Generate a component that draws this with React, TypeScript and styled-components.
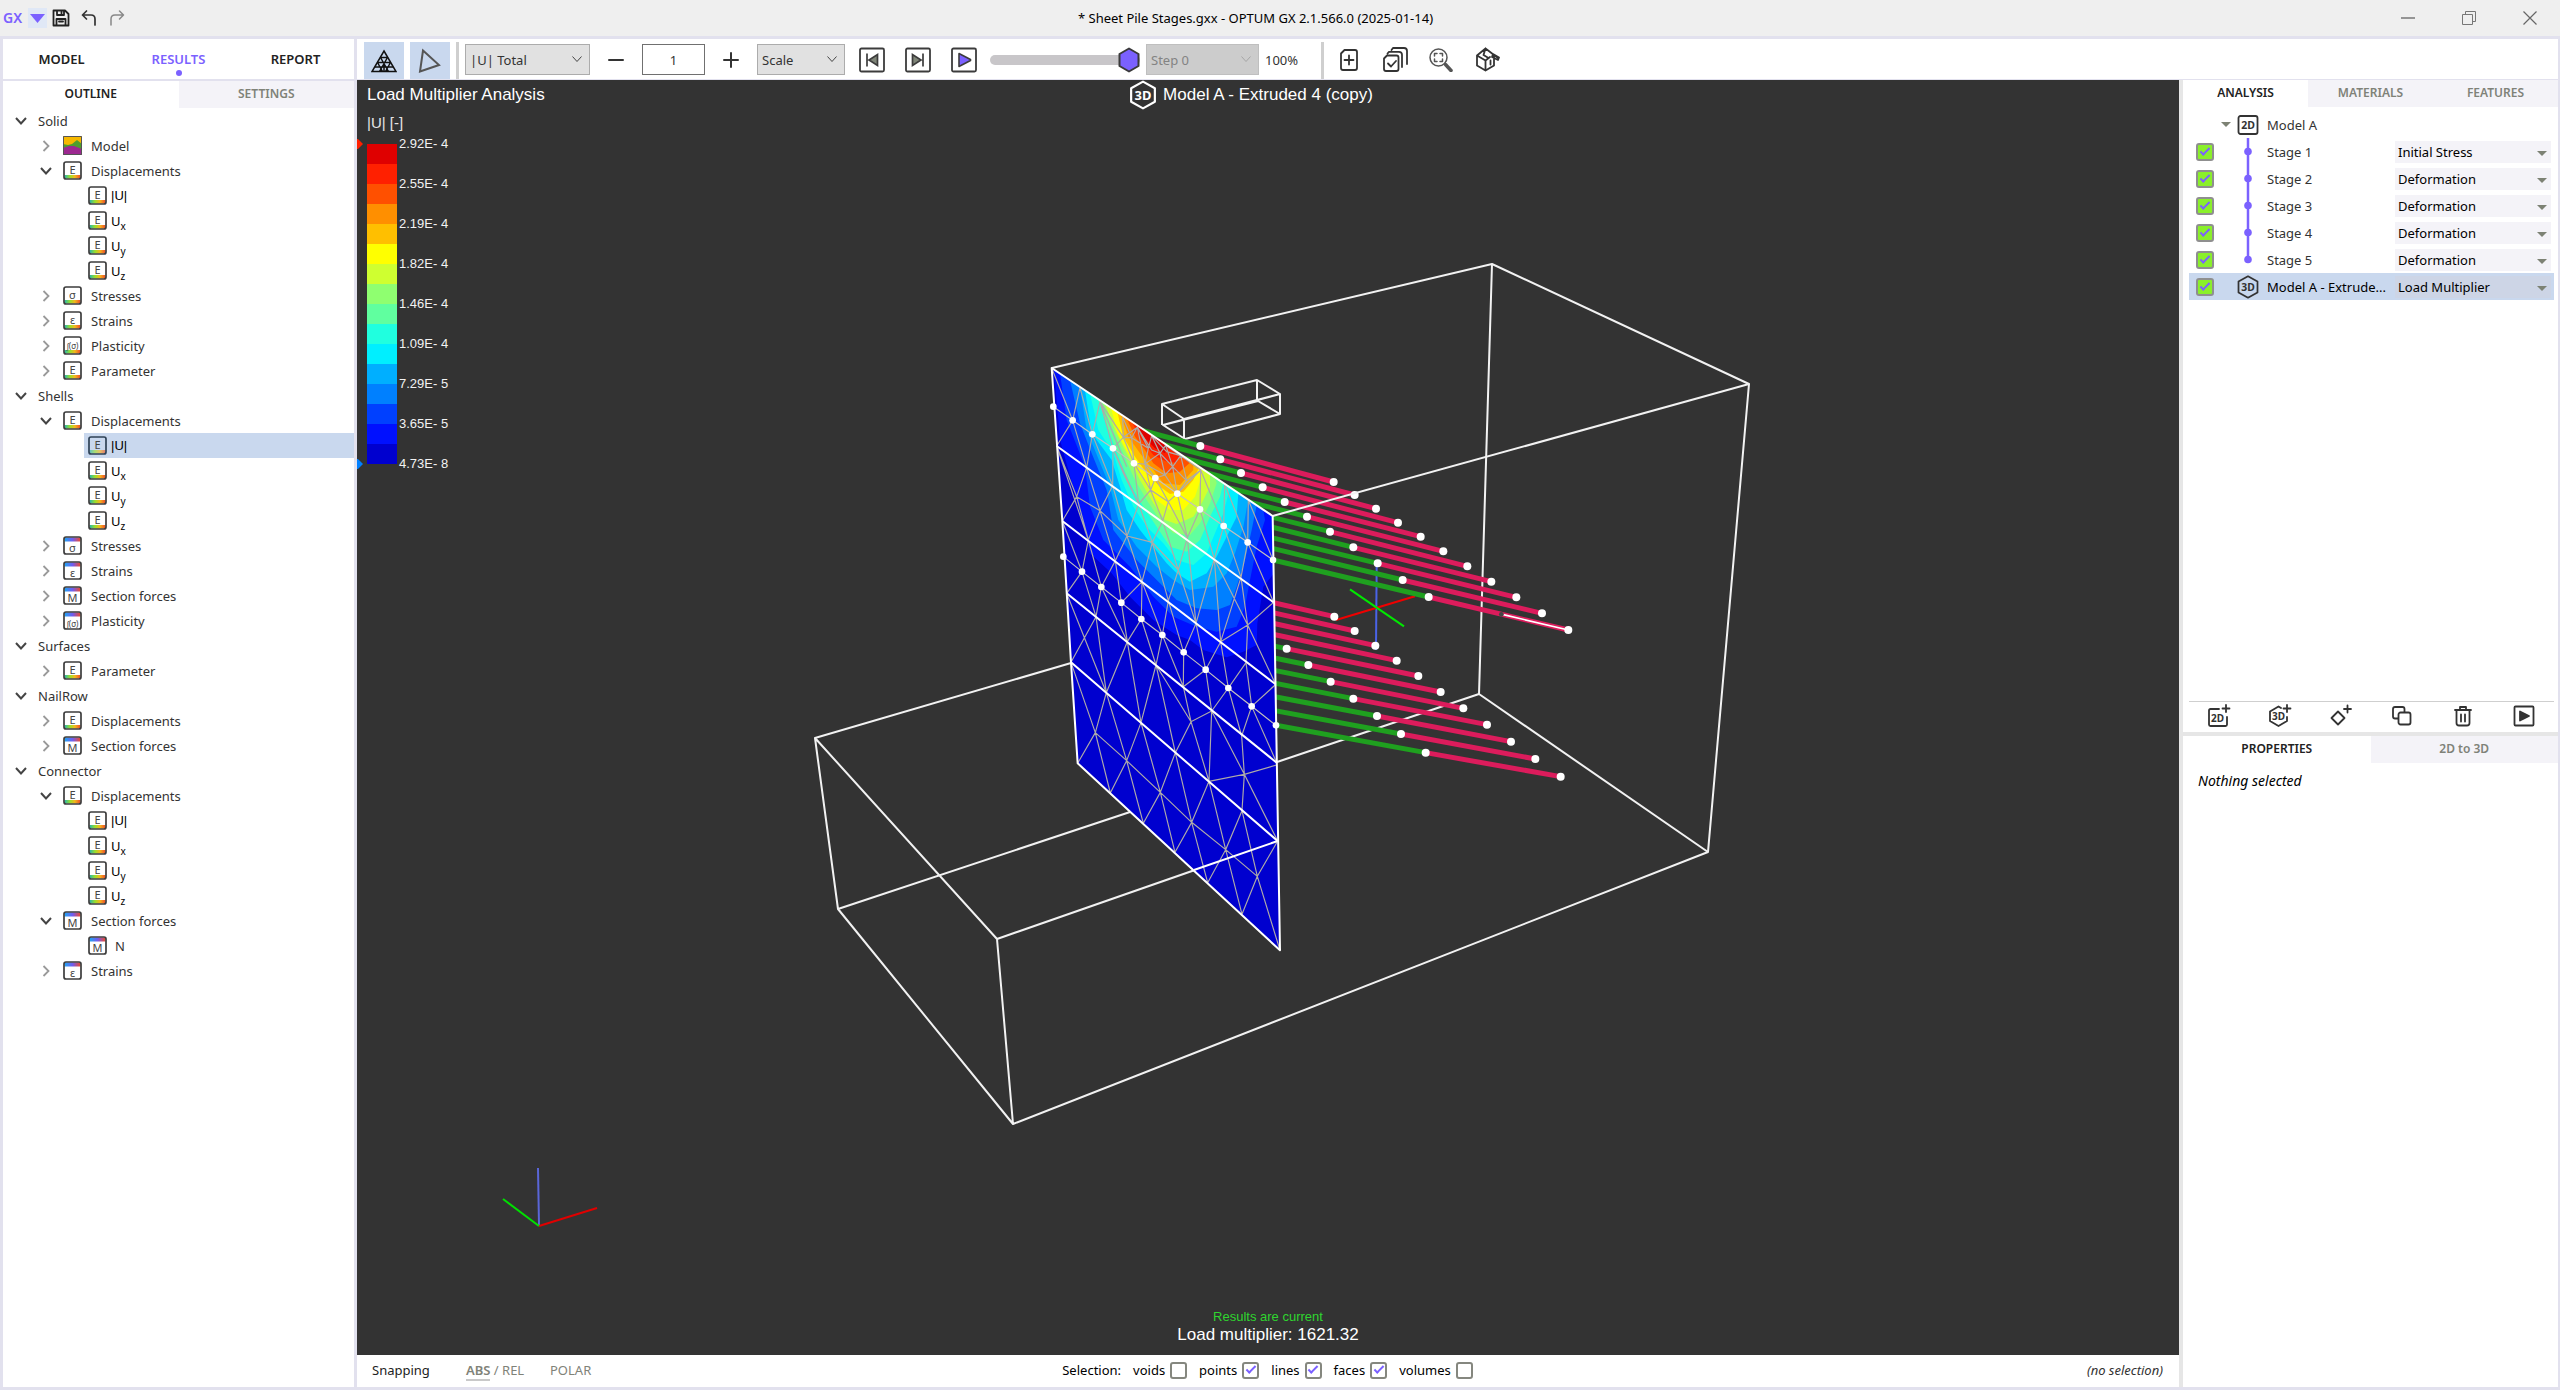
import React from "react";
import styled, { createGlobalStyle, css } from "styled-components";

const ink = "#333333";
const violet = "#7b61ff";
const lavender = "#e2e1ee";
const mutedTab = "#7f8278";
const pale = "#f4f3f8";
const picked = "#c9d8ee";
const ui = '"Noto Sans", "Open Sans", sans-serif';
const plain = '"Liberation Sans", Arial, sans-serif';

const GlobalStyle = createGlobalStyle`
  *, *::before, *::after { box-sizing: border-box; }
  body { margin: 0; background: ${lavender}; }
  button, input, select { font: inherit; color: inherit; margin: 0; }
  button { border: 0; padding: 0; background: none; cursor: pointer; }
  ul { list-style: none; margin: 0; padding: 0; }
  svg { display: block; flex: none; }
`;

const Window = styled.div`
  min-height: 100vh;
  display: flex;
  flex-direction: column;
  font: 13px/20px ${ui};
  color: ${ink};
`;

/* ---------- title bar ---------- */
const TitleBar = styled.header`
  height: 36px;
  display: flex;
  align-items: center;
  background: #efefef;
`;
const QuickAccess = styled.div`
  width: 134px;
  padding-left: 3px;
  display: flex;
  align-items: center;
`;
const Brand = styled.span`
  width: 25px;
  font-size: 14px;
  font-weight: 600;
  color: ${violet};
`;
const QuickButton = styled.button<{ $lit?: boolean }>`
  width: ${(p) => (p.$lit ? 19 : 28)}px;
  height: 20px;
  display: grid;
  place-items: center;
  background: ${(p) => (p.$lit ? "#e0e8f6" : "none")};
`;
const WindowTitle = styled.h1`
  flex: 1;
  margin: 0;
  text-align: center;
  font-size: 13px;
  font-weight: 400;
  color: #000;
`;
const WindowButton = styled.button`
  width: 61px;
  height: 36px;
  display: grid;
  place-items: center;
`;

/* ---------- frame ---------- */
const Body = styled.div`
  flex: 1;
  display: flex;
  gap: 3px;
  padding: 3px 2px 3px 3px;
`;
const LeftPanel = styled.aside`
  width: 351px;
  flex: none;
  background: #fff;
`;
const Workspace = styled.div`
  flex: 1;
  min-width: 0;
  display: flex;
  flex-direction: column;
`;
const Split = styled.div`
  flex: 1;
  display: flex;
  gap: 4px;
  background: #e6e6e6;
`;
const Center = styled.main`
  flex: 1;
  min-width: 0;
  display: flex;
  flex-direction: column;
`;
const RightPanel = styled.aside`
  width: 375px;
  flex: none;
  display: flex;
  flex-direction: column;
  gap: 4px;
`;

/* ---------- tabs ---------- */
const MainTabs = styled.nav`
  display: flex;
  height: 42px;
  border-bottom: 2px solid ${lavender};
`;
const MainTab = styled.button<{ $on?: boolean }>`
  flex: 1;
  display: flex;
  flex-direction: column;
  align-items: center;
  padding-top: 10px;
  font-size: 13px;
  font-weight: 600;
  color: ${(p) => (p.$on ? violet : "#222")};
  &::after {
    content: "";
    width: 6px;
    height: 6px;
    margin-top: 1px;
    border-radius: 50%;
    background: ${(p) => (p.$on ? violet : "transparent")};
  }
`;
const SubTabs = styled.nav`
  display: flex;
  height: 27px;
`;
const SubTab = styled.button<{ $on?: boolean }>`
  flex: 1;
  padding-bottom: 2px;
  font-size: 12px;
  font-weight: 600;
  color: ${(p) => (p.$on ? "#222" : mutedTab)};
  background: ${(p) => (p.$on ? "#fff" : pale)};
`;

/* ---------- outline tree ---------- */
const TreeRow = styled.li<{ $level: number; $on?: boolean }>`
  height: 25px;
  display: flex;
  align-items: center;
  ${(p) => p.$level === 0 && css`padding-left: 9px; gap: 9px;`}
  ${(p) => p.$level === 1 && css`padding-left: 34px; gap: 9px;`}
  ${(p) => p.$level === 2 && css`margin-left: 81px; padding-left: 4px; gap: 4px;`}
  background: ${(p) => (p.$on ? picked : "transparent")};
`;
const Twisty = styled.button`
  width: 17px;
  height: 20px;
  display: grid;
  place-items: center;
`;
const TreeLabel = styled.span<{ $strong?: boolean; $inset?: boolean; $magnitude?: boolean }>`
  color: ${(p) => (p.$strong ? "#000" : ink)};
  padding-left: ${(p) => (p.$inset ? 4 : 0)}px;
  ${(p) => p.$magnitude && css`font-family: ${plain};`}
  sub { font-size: 10px; line-height: 0; }
`;

/* ---------- toolbar ---------- */
const Toolbar = styled.div`
  height: 41px;
  display: flex;
  align-items: center;
  padding: 1px 0 0 7px;
  background: #fff;
  border-bottom: 1px solid ${lavender};
`;
const ToggleButton = styled.button`
  width: 40px;
  height: 37px;
  margin: 2px 6px 0 0;
  display: grid;
  place-items: center;
  background: ${picked};
`;
const Divider = styled.span`
  width: 3px;
  height: 37px;
  margin: 2px 6px 0 0;
  background: #cfcfcf;
`;
const SelectBox = styled.span<{ $w: number; $off?: boolean }>`
  position: relative;
  width: ${(p) => p.$w}px;
  height: 31px;
  color: ${(p) => (p.$off ? "#838383" : ink)};
  select {
    width: 100%;
    height: 100%;
    appearance: none;
    padding: 0 4px;
    border: 1px solid ${(p) => (p.$off ? "#bfbfbf" : "#acacac")};
    border-radius: 0;
    background: ${(p) => (p.$off ? "#cccccc" : "#e1e1e1")};
    opacity: 1;
  }
  svg { position: absolute; right: 6px; top: 12px; pointer-events: none; }
`;
const SpinButton = styled.button`
  width: 52px;
  height: 31px;
  display: grid;
  place-items: center;
`;
const Amount = styled.input`
  width: 63px;
  height: 31px;
  border: 1px solid #707070;
  text-align: center;
  background: #fff;
`;
const StepButton = styled.button`
  width: 26px;
  height: 26px;
  margin-right: 20px;
`;
const ScaleSelect = styled.span`
  display: flex;
  margin-right: 14px;
`;
const thumb = encodeURIComponent(
  '<svg xmlns="http://www.w3.org/2000/svg" width="22" height="26" viewBox="0 0 22 26"><path d="M11 1.5 20.5 7v12L11 24.500 1.500 19V7Z" fill="#7b61ff" stroke="#3a3a3a" stroke-width="2" stroke-linejoin="round"/></svg>'
);
const StepSlider = styled.input`
  width: 150px;
  height: 26px;
  margin: 0 6px 0 -7px;
  appearance: none;
  background: transparent;
  &::-webkit-slider-runnable-track {
    height: 10px;
    border-radius: 5px;
    background: #c8c6c9;
  }
  &::-webkit-slider-thumb {
    appearance: none;
    width: 22px;
    height: 26px;
    margin-top: -8px;
    background: url("data:image/svg+xml,${thumb}") center no-repeat;
  }
`;
const Percent = styled.span`
  width: 56px;
  margin-left: 6px;
`;
const ToolButton = styled.button`
  width: 46px;
  height: 32px;
  display: grid;
  place-items: center;
`;
const ToolGroup = styled.div`
  display: flex;
  margin-left: -4px;
`;

/* ---------- viewport ---------- */
const Viewport = styled.section`
  position: relative;
  flex: 1;
  overflow: hidden;
  background: #333;
  font-family: ${plain};
  color: #fff;
`;
const Scene = styled.svg`
  position: absolute;
  inset: 0;
  width: 100%;
  height: 100%;
`;
const Overlay = styled.div`
  position: absolute;
  inset: 0;
  display: flex;
  flex-direction: column;
  justify-content: space-between;
`;
const Heading = styled.div`
  display: grid;
  grid-template-columns: 1fr auto 1fr;
  align-items: center;
  height: 30px;
  padding: 0 10px;
  font-size: 17px;
`;
const ModelName = styled.span`
  display: flex;
  align-items: center;
  gap: 6px;
  padding-right: 34px;
`;
const Unit = styled.div`
  padding-left: 10px;
  height: 14px;
  margin-top: 3px;
  font-size: 15px;
  line-height: 20px;
  color: #e6e6e6;
`;
const Legend = styled.div`
  display: flex;
  margin-top: -3px;
`;
const Markers = styled.div`
  width: 10px;
  height: 360px;
  padding: 13px 0;
  display: flex;
  flex-direction: column;
  justify-content: space-between;
`;
const Bands = styled.div`
  width: 30px;
  margin: 20px 2px 20px 0;
`;
const Band = styled.div<{ $c: string }>`
  height: 20px;
  background: ${(p) => p.$c};
`;
const Ticks = styled.ul`
  font-size: 13px;
  line-height: 40px;
  color: #f2f2f2;
`;
const Outcome = styled.div`
  text-align: center;
  font-size: 17px;
  line-height: 18px;
  padding-bottom: 11px;
`;
const Current = styled.div`
  font-size: 13px;
  color: #2fd52f;
`;

/* ---------- status bar ---------- */
const StatusBar = styled.footer`
  height: 32px;
  display: grid;
  grid-template-columns: 1fr auto 1fr;
  align-items: center;
  padding: 0 16px 2px 15px;
  background: #fff;
`;
const SnapGroup = styled.div`
  display: flex;
  color: ${mutedTab};
`;
const SnapLabel = styled.span`
  width: 94px;
  color: #222;
`;
const SnapMode = styled.span`
  width: 84px;
  b { font-weight: 600; border-bottom: 2px solid #c9c9c9; }
`;
const SelectionGroup = styled.div`
  display: flex;
  align-items: center;
  gap: 12px;
  color: #000;
`;
const CheckLabel = styled.label`
  display: flex;
  align-items: center;
  gap: 5px;
`;
const Check = styled.input<{ $green?: boolean }>`
  appearance: none;
  width: ${(p) => (p.$green ? 18 : 17)}px;
  height: ${(p) => (p.$green ? 18 : 17)}px;
  border: ${(p) => (p.$green ? "2px solid #8f8f8f" : "2px solid #85877f")};
  border-radius: 3px;
  background: ${(p) => (p.$green ? "#8af02a" : "#fff")};
  display: grid;
  place-items: center;
  &:checked::before {
    content: "";
    width: 10px;
    height: 5px;
    margin-top: -3px;
    border: solid ${violet};
    border-width: 0 0 2px 2px;
    transform: rotate(-45deg);
  }
`;
const NoSelection = styled.em`
  text-align: right;
`;

/* ---------- right panel ---------- */
const AnalysisPane = styled.section`
  height: 652px;
  display: flex;
  flex-direction: column;
  background: #fff;
`;
const StageList = styled.ul`
  flex: 1;
  padding: 4px 4px 0 6px;
`;
const StageRow = styled.li<{ $on?: boolean }>`
  height: 27px;
  display: grid;
  grid-template-columns: 48px 30px 128px 156px;
  align-items: center;
  background: ${(p) => (p.$on ? picked : "transparent")};
`;
const CheckCell = styled.span<{ $end?: boolean }>`
  display: flex;
  align-items: center;
  justify-content: ${(p) => (p.$end ? "flex-end" : "flex-start")};
  padding: ${(p) => (p.$end ? "0 5px 0 0" : "0 0 0 7px")};
`;
const StageName = styled.span<{ $dark?: boolean }>`
  white-space: nowrap;
  color: ${(p) => (p.$dark ? "#000" : ink)};
`;
const KindBox = styled.span<{ $on?: boolean }>`
  position: relative;
  height: 22px;
  color: #000;
  select {
    width: 100%;
    height: 100%;
    appearance: none;
    border: 0;
    padding: 0 3px;
    background: ${(p) => (p.$on ? "#cdd5e6" : pale)};
  }
  svg { position: absolute; right: 3px; top: 9px; pointer-events: none; }
`;
const ActionBar = styled.div`
  height: 31px;
  margin: 0 4px 0 6px;
  display: grid;
  grid-template-columns: repeat(6, 1fr);
  border-top: 1px solid #cfcfcf;
`;
const ActionButton = styled.button`
  display: grid;
  place-items: center;
  padding-bottom: 2px;
`;
const PropertiesPane = styled.section`
  flex: 1;
  background: #fff;
`;
const Empty = styled.p`
  margin: 0;
  padding: 8px 15px;
  font-style: italic;
  font-size: 14px;
  color: #000;
`;

/* ---------- small drawings ---------- */
const ChevronDown = ({ c = "#444", s = 14, w = 1 }) => (
  <svg width={s} height={s / 2} viewBox="0 0 14 7" fill="none" stroke={c} strokeWidth={w}>
    <path d="M2.500 0.500 7 5.500l4.500-5" />
  </svg>
);
const Caret = () => (
  <svg width="12" height="7" viewBox="0 0 12 7"><path d="M1 1h10L6 6Z" fill="#7d8274" /></svg>
);
const Open = () => (
  <svg width="14" height="12" viewBox="0 0 14 12" fill="none" stroke="#444" strokeWidth="2"><path d="M2 3l5 5.500L12 3" /></svg>
);
const Closed = () => (
  <svg width="10" height="14" viewBox="0 0 10 14" fill="none" stroke="#999" strokeWidth="1.800"><path d="M2.500 2l5 5-5 5" /></svg>
);

type Glyph = "land" | "E" | "σ" | "ε" | "f" | "M" | "σ^" | "ε^" | "f^";
const ResultIcon = ({ kind, dim }: { kind: Glyph; dim?: boolean }) => {
  if (kind === "land")
    return (
      <svg width="19" height="19" viewBox="0 0 19 19">
        <path d="M0 0h19v19H0Z" fill="#f6b800" />
        <path d="M0 8l5 1 4-1 5-4 5 4v6H0Z" fill="#4e9e2e" />
        <path d="M0 12l6-2 5 0 8 3v6H0Z" fill="#9c2890" />
        <path d="M.5.5h18v18H.5Z" fill="none" stroke="#555" />
      </svg>
    );
  const top = kind === "M" || kind.endsWith("^");
  const ch = kind.startsWith("f") ? "∫(σ)" : kind[0];
  const id = top ? "cool" : "warm";
  return (
    <svg width="19" height="19" viewBox="0 0 19 19">
      <rect x="1" y="1" width="17" height="17" rx="2" fill={dim ? picked : "#fff"} />
      <rect x="1.500" y={top ? 1.5 : 14} width="16" height={top ? 4 : 3.5} fill={`url(#${id})`} opacity={dim ? 0.65 : 1} />
      <rect x="1" y="1" width="17" height="17" rx="2" fill="none" stroke={dim ? "#2f4256" : "#3c3c3c"} strokeWidth="1.700" />
      <text
        x="9.500"
        y={top ? 15.5 : 12.5}
        textAnchor="middle"
        fontSize={ch.length > 1 ? 8 : 11}
        fontFamily="Noto Sans, sans-serif"
        fill="#444"
      >
        {ch}
      </text>
    </svg>
  );
};
const GradientStore = styled.svg`
  position: absolute;
`;
const Gradients = () => (
  <GradientStore width="0" height="0" aria-hidden="true">
    <defs>
      <linearGradient id="warm">
        <stop offset="0" stopColor="#26b5b0" />
        <stop offset=".35" stopColor="#9be02a" />
        <stop offset=".65" stopColor="#f4b71c" />
        <stop offset="1" stopColor="#ee4a2a" />
      </linearGradient>
      <linearGradient id="cool">
        <stop offset="0" stopColor="#1ea7f2" />
        <stop offset=".5" stopColor="#6f5df0" />
        <stop offset="1" stopColor="#f0492c" />
      </linearGradient>
    </defs>
  </GradientStore>
);

const Icon2D = () => (
  <svg width="22" height="20" viewBox="0 0 22 20">
    <rect x="1.500" y="1" width="19" height="18" rx="2" fill="none" stroke={ink} strokeWidth="1.800" />
    <text x="11" y="14" textAnchor="middle" fontSize="10.500" fontWeight="700" fontFamily="Noto Sans, sans-serif" fill={ink}>2D</text>
  </svg>
);
const Icon3D = ({ c = ink, w = 22, h = 24 }) => (
  <svg width={w} height={h} viewBox="0 0 20 22">
    <path d="M10 1.200 18.700 6v10L10 20.800 1.300 16V6Z" fill="none" stroke={c} strokeWidth="1.600" strokeLinejoin="round" />
    <text x="10" y="14.500" textAnchor="middle" fontSize="9.500" fontWeight="700" fontFamily="Noto Sans, sans-serif" fill={c}>3D</text>
  </svg>
);
const line = { fill: "none", stroke: ink, strokeWidth: 1.8, strokeLinejoin: "round" as const, strokeLinecap: "round" as const };

const MeshIcon = () => (
  <svg width="26" height="24" viewBox="0 0 26 24" fill="none" stroke="#111" strokeWidth="1.500">
    <path d="M13 2 25 22.500H1Z" />
    <path d="M9.500 8.500h7M6.500 13.500h13M4 18h18M9.500 8.500l8 14M16.500 8.500l-8 14M6.500 13.500l5 9M19.500 13.500l-5 9M13 13.500v9" />
  </svg>
);
const PlaneIcon = () => (
  <svg width="26" height="26" viewBox="0 0 26 26" fill="none" stroke="#555" strokeWidth="2"><path d="M6 2.500 22 17 3 23.500Z" /></svg>
);
const TransportIcon = ({ kind }: { kind: "first" | "last" | "play" }) => (
  <svg width="26" height="26" viewBox="0 0 26 26">
    <rect x="1" y="1.500" width="24" height="23" rx="1.500" fill="#fff" stroke="#3c3c3c" strokeWidth="1.800" />
    {kind === "first" && <path d="M8 6.500v13M18.500 7.500v11L10 13Z" fill="#7f8578" stroke="#3c3c3c" strokeWidth="1.700" />}
    {kind === "last" && <path d="M18 6.500v13M7.500 7.500v11L16 13Z" fill="#7f8578" stroke="#3c3c3c" strokeWidth="1.700" />}
    {kind === "play" && <path d="M8 6.500v13L19.500 13.500v-1Z" fill={violet} stroke="#3c3c3c" strokeWidth="1.600" strokeLinejoin="round" />}
  </svg>
);

/* ---------- data ---------- */
type Row = { l: number; t: string; i?: Glyph; o?: boolean; sub?: string; on?: boolean };
const components = (on?: boolean): Row[] => [
  { l: 2, t: "|U|", i: "E", on },
  { l: 2, t: "U", sub: "x", i: "E" },
  { l: 2, t: "U", sub: "y", i: "E" },
  { l: 2, t: "U", sub: "z", i: "E" },
];
const rows: Row[] = [
  { l: 0, t: "Solid", o: true },
  { l: 1, t: "Model", i: "land" },
  { l: 1, t: "Displacements", i: "E", o: true },
  ...components(),
  { l: 1, t: "Stresses", i: "σ" },
  { l: 1, t: "Strains", i: "ε" },
  { l: 1, t: "Plasticity", i: "f" },
  { l: 1, t: "Parameter", i: "E" },
  { l: 0, t: "Shells", o: true },
  { l: 1, t: "Displacements", i: "E", o: true },
  ...components(true),
  { l: 1, t: "Stresses", i: "σ^" },
  { l: 1, t: "Strains", i: "ε^" },
  { l: 1, t: "Section forces", i: "M" },
  { l: 1, t: "Plasticity", i: "f^" },
  { l: 0, t: "Surfaces", o: true },
  { l: 1, t: "Parameter", i: "E" },
  { l: 0, t: "NailRow", o: true },
  { l: 1, t: "Displacements", i: "E" },
  { l: 1, t: "Section forces", i: "M" },
  { l: 0, t: "Connector", o: true },
  { l: 1, t: "Displacements", i: "E", o: true },
  ...components(),
  { l: 1, t: "Section forces", i: "M", o: true },
  { l: 2, t: "N", i: "M" },
  { l: 1, t: "Strains", i: "ε^" },
];

const palette = [
  "#df0000", "#ff2000", "#ff5000", "#ff8f00", "#ffbf00", "#ffff00", "#cfff30", "#8fff70",
  "#60ff9f", "#20ffdf", "#00efff", "#00afff", "#0080ff", "#0040ff", "#0010ff", "#0000cf",
];
const ticks = ["2.92E- 4", "2.55E- 4", "2.19E- 4", "1.82E- 4", "1.46E- 4", "1.09E- 4", "7.29E- 5", "3.65E- 5", "4.73E- 8"];

/* contour bands on the wall, outermost first */
const contours = [
  "72,88 90,300 140,480 180,640 245,700 300,770 370,840 440,885 480,900 520,930 590,952 640,935 680,915 682,850 700,740 732,700 728,528",
  "90,100 110,240 165,380 180,500 220,600 300,680 370,770 430,830 500,860 560,875 620,860 645,800 660,720 680,620 705,540 700,510",
  "120,121 150,250 185,340 230,450 250,570 320,660 390,730 440,780 500,805 560,810 600,795 620,740 645,660 665,570 680,496",
  "150,141 170,270 215,380 240,440 265,540 320,620 380,680 430,720 480,750 550,740 590,700 615,640 640,560 655,479",
  "165,151 185,280 245,360 270,440 290,510 330,570 370,620 410,670 440,700 480,725 530,700 560,650 590,590 620,530 625,459",
  "180,161 205,270 250,340 275,420 310,500 350,560 400,610 440,660 490,675 530,640 555,580 580,520 600,442",
  "203,176 235,270 270,360 300,430 340,500 380,560 420,620 470,635 510,600 540,530 570,470 580,429",
  "215,184 245,260 280,340 310,410 350,480 390,540 430,580 480,585 510,550 540,490 560,430 555,412",
  "225,191 255,270 290,340 330,420 370,490 405,540 440,552 490,530 515,490 540,440 540,402",
  "243,203 262,280 300,350 340,420 380,480 420,510 460,510 495,470 518,400 512,383",
  "262,216 280,290 315,350 350,400 390,440 420,462 460,455 490,420 508,380",
  "272,222 295,290 330,340 370,390 400,430 450,435 490,390 490,368",
  "290,235 315,290 345,330 370,370 410,400 450,395 478,370 465,352",
  "305,245 335,300 370,345 410,365 440,368 450,342",
  "320,255 345,295 375,325 405,340 415,318",
];

const upper = [[70,200],[128,241],[187,283],[249,325],[312,370],[376,414],[442,461],[510,508],[581,558],[653,607],[729,660]];
const lower = [[100,650],[156,695],[214,741],[274,788],[334,837],[397,885],[461,937],[527,989],[595,1044],[665,1099],[738,1156]];
const upperMid = [[511,318],[571,358],[633,399],[698,442],[764,486],[831,530],[900,575],[970,622],[1043,670],[1118,720],[1196,771]];
const upperEnd = [[911,426],[974,465],[1038,506],[1104,548],[1172,590],[1240,634],[1312,679],[1384,725],[1459,772],[1536,820],[1615,870]];
const lowerMid = [[522,740],[582,785],[643,831],[706,878],[770,926],[835,975],[902,1025],[970,1076],[1041,1128],[1113,1182],[1187,1238]];
const lowerEnd = [[913,830],[974,873],[1036,917],[1100,962],[1165,1008],[1232,1056],[1300,1105],[1371,1154],[1443,1205],[1516,1257],[1592,1310]];

const mesh = `
M65 84 128 241 150 143 187 283 210 185 249 325 280 292 278 232
M128 241 80 318 M128 241 170 383 187 283 248 437 249 325 326 492 312 370 362 450 326 492 M362 450 398 543 M376 414 362 450 415 485 398 543
M442 461 415 485 M376 414 415 485 472 593 442 461 M510 508 472 593 M510 508 553 657 581 558 633 712 653 607 731 787
M442 461 512 390 510 508 M512 390 581 558 584 432 653 607 655 480 729 660
M210 185 280 292 322 262 M280 292 305 293 278 232 M305 293 322 262 345 372 312 370 280 292 M305 293 312 370
M322 262 355 325 365 287 390 340 407 316 428 380 452 347 470 422 442 461 M322 262 365 330 390 340 428 380 405 405 390 340 345 372 355 325 305 293
M345 372 376 414 405 405 442 461 428 380 470 422 512 390 M407 316 452 347 M345 372 405 405 M362 450 345 372 M365 287 410 335 452 347 M428 380 452 347 512 390
M249 325 280 400 326 492 M210 185 290 380
M80 318 140 470 97 543 M170 383 140 470 175 600 M140 470 210 512 291 588 367 607 445 690 M170 383 210 512 175 600 M248 437 210 512 256 662 M248 437 291 588 256 662
M326 492 291 588 336 725 M326 492 367 607 336 725 M398 543 367 607 415 782 M398 543 445 690 472 593 M445 690 415 782 M445 690 498 850 472 593 M553 657 498 850 M553 657 572 905 633 712 653 855
M731 787 653 855 572 905 M653 855 648 968 M653 855 737 1033 M553 657 653 855
M80 318 175 600 M97 543 156 695 110 760 M175 600 156 695 M175 600 214 741 256 662 274 788 336 725 334 837 M336 725 397 885 415 782 461 937 498 850 527 989 572 905 595 1044 648 968 665 1099 737 1033
M156 695 198 830 214 741 292 905 274 788 M334 837 292 905 M334 837 378 975 397 885 460 1040 461 937 M527 989 460 1040 M527 989 545 1113 595 1044 635 1188 665 1099 740 1268
M198 830 123 967 M198 830 229 1058 292 905 333 1148 378 975 436 1238 483 1145 378 975 M460 1040 483 1145 545 1113 M483 1145 537 1324 545 1113 643 1303 537 1324 M110 760 229 1058
M635 1188 643 1303 743 1503 M643 1303 636 1412 M643 1303 740 1275 M665 1099 738 1033
M123 967 196 1178 143 1270 M229 1058 196 1178 241 1359 M196 1178 290 1262 391 1357 485 1447 587 1529 682 1609 M229 1058 290 1262 241 1359 M333 1148 290 1262 340 1450 M333 1148 391 1357 340 1450 M436 1238 391 1357 435 1537
M436 1238 485 1447 435 1537 M537 1324 485 1447 533 1628 M537 1324 587 1529 533 1628 M636 1412 587 1529 636 1723 M636 1412 682 1609 M743 1503 682 1609 636 1723 M682 1609 750 1831`;

const Dots = ({ pts, r }: { pts: number[][]; r: number }) => (
  <g fill="#fff">{pts.map(([x, y]) => <circle key={`${x}-${y}`} cx={x} cy={y} r={r} />)}</g>
);
const Nails = ({ a, b, c }: { a: number[][]; b: number[][]; c: number[][] }) => (
  <g strokeWidth="15">
    {a.map((p, i) => (
      <g key={i}>
        <path d={`M${p} ${b[i]}`} stroke="#1fa01f" />
        <path d={`M${b[i]} ${c[i]}`} stroke="#dc1c5c" />
      </g>
    ))}
    <Dots pts={b} r={12} />
    <Dots pts={c} r={12} />
  </g>
);

const ModelScene = () => (
  <Scene viewBox="357 80 1822 1275" fill="none" role="img" aria-label="Displacement of the sheet pile wall">
    <defs>
      <clipPath id="wall"><path d="M65 84 728 528 750 1831 143 1270 123 967 97 543Z" /></clipPath>
    </defs>
    <g stroke="#f2f2f2" strokeWidth="2" strokeLinejoin="round">
      <path d="M1052 368 1492 264 1749 384 1708 852 1013 1124 838 909 815 738 1071 663M815 738 997 939 1013 1124M997 939 1278 841M838 909 1130 812" />
      <path d="M1492 264 1479 694 1708 852M1479 694 1277 762" />
      <path d="M1162 404 1257 380 1280 394 1184 419ZM1163 425 1258 401 1280 414 1185 439ZM1162 404v21M1257 380v21M1280 394v20M1184 419v20M1184 419 1280 394M1163 425 1280 394" />
    </g>
    <g transform="translate(1030 340) scale(.33333)">
      <path d="M1040 680 1038 930" stroke="#4a63e6" strokeWidth="6" />
      <path d="M918 840 1155 769" stroke="#f00000" strokeWidth="6" />
      <path d="M960 748 1122 859" stroke="#00e800" strokeWidth="6" />
      <Nails a={lower} b={lowerMid} c={lowerEnd} />
      <Nails a={upper} b={upperMid} c={upperEnd} />
      <path d="M1420 824 1615 870" stroke="#fff" strokeWidth="5" />
      <circle cx="1414" cy="823" r="7" fill="#444" />
      <path d="M728 528 2157 132" stroke="#f2f2f2" strokeWidth="6" />
      <g clipPath="url(#wall)">
        <path d="M0 0h800v1900H0Z" fill="#0000cf" />
        {contours.map((p, i) => <polygon key={i} points={p} fill={palette[14 - i]} />)}
        <path d={mesh} stroke="#aeaaa8" strokeWidth="3.500" />
        <path d={`M${upper.join(" ")}M${lower.join(" ")}`} stroke="#c4c0be" strokeWidth="3.500" />
      </g>
      <g stroke="#fff" strokeWidth="6" strokeLinejoin="round">
        <path d="M65 84 728 528 750 1831 143 1270 123 967 97 543Z" />
        <path d="M80 318 731 787M97 543 737 1033M110 760 740 1268M123 967 743 1503M492 1590 743 1503" />
      </g>
      <Dots pts={upper} r={10} />
      <Dots pts={lower} r={10} />
    </g>
    <g strokeWidth="2">
      <path d="M539 1226 538 1168" stroke="#5a66d8" />
      <path d="M539 1226 597 1208" stroke="#e00000" />
      <path d="M539 1226 503 1199" stroke="#00e000" />
    </g>
  </Scene>
);

const stages = [
  ["Stage 1", "Initial Stress"],
  ["Stage 2", "Deformation"],
  ["Stage 3", "Deformation"],
  ["Stage 4", "Deformation"],
  ["Stage 5", "Deformation"],
];
const filters: [string, boolean][] = [["voids", false], ["points", true], ["lines", true], ["faces", true], ["volumes", false]];

const Kind = ({ name, value, on }: { name: string; value: string; on?: boolean }) => (
  <KindBox $on={on}>
    <select aria-label={`${name} analysis type`} defaultValue={value}><option>{value}</option></select>
    <Caret />
  </KindBox>
);

export default function App() {
  return (
    <Window>
      <GlobalStyle />
      <Gradients />
      <TitleBar>
        <QuickAccess>
          <Brand>GX</Brand>
          <QuickButton $lit aria-label="Menu"><svg width="15" height="9" viewBox="0 0 15 9"><path d="M0 0h15L7.500 9Z" fill={violet} /></svg></QuickButton>
          <QuickButton aria-label="Save">
            <svg width="18" height="18" viewBox="0 0 18 18" {...line} stroke="#222"><path d="M1.500 1.500h11.500l3.500 3.500v11.500h-15ZM5 1.500v4.500h7V1.500M4.500 16.500V10h9v6.500M9.500 3v1.500M7 12.500h4" /></svg>
          </QuickButton>
          <QuickButton aria-label="Undo">
            <svg width="18" height="18" viewBox="0 0 18 18" {...line} strokeWidth="1.700"><path d="M6.500 2 2.500 6l4 4M2.500 6H11q4 0 4 4v6" /></svg>
          </QuickButton>
          <QuickButton aria-label="Redo">
            <svg width="18" height="18" viewBox="0 0 18 18" {...line} stroke="#888" strokeWidth="1.500"><path d="M11.500 2l4 4-4 4M15.500 6H7Q3 6 3 10v6" /></svg>
          </QuickButton>
        </QuickAccess>
        <WindowTitle>* Sheet Pile Stages.gxx - OPTUM GX 2.1.566.0 (2025-01-14)</WindowTitle>
        <WindowButton aria-label="Minimize"><svg width="14" height="14" viewBox="0 0 14 14" stroke="#777" strokeWidth="1.500"><path d="M0 7h14" /></svg></WindowButton>
        <WindowButton aria-label="Restore"><svg width="14" height="14" viewBox="0 0 14 14" fill="none" stroke="#777"><path d="M.5 3.500h10v10H.5ZM3.500 3.500v-3h10v10h-3" /></svg></WindowButton>
        <WindowButton aria-label="Close"><svg width="14" height="14" viewBox="0 0 14 14" stroke="#666" strokeWidth="1.200"><path d="M.5.5l13 13M13.500.5l-13 13" /></svg></WindowButton>
      </TitleBar>

      <Body>
        <LeftPanel>
          <MainTabs>
            <MainTab>MODEL</MainTab>
            <MainTab $on>RESULTS</MainTab>
            <MainTab>REPORT</MainTab>
          </MainTabs>
          <SubTabs>
            <SubTab $on>OUTLINE</SubTab>
            <SubTab>SETTINGS</SubTab>
          </SubTabs>
          <ul>
            {rows.map((r, i) => (
              <TreeRow key={i} $level={r.l} $on={r.on}>
                {r.l < 2 && <Twisty aria-label={`Toggle ${r.t}`}>{r.o ? <Open /> : <Closed />}</Twisty>}
                {r.i && <ResultIcon kind={r.i} dim={r.on} />}
                <TreeLabel $strong={r.l === 2 && r.t !== "N"} $inset={r.t === "N"} $magnitude={r.t === "|U|"}>
                  {r.t}{r.sub && <sub>{r.sub}</sub>}
                </TreeLabel>
              </TreeRow>
            ))}
          </ul>
        </LeftPanel>

        <Workspace>
          <Toolbar>
            <ToggleButton aria-label="Show mesh"><MeshIcon /></ToggleButton>
            <ToggleButton aria-label="Show plane"><PlaneIcon /></ToggleButton>
            <Divider />
            <SelectBox $w={125}>
              <select aria-label="Result" defaultValue="|U| Total"><option>|U| Total</option></select>
              <ChevronDown />
            </SelectBox>
            <SpinButton aria-label="Decrease"><svg width="16" height="16" viewBox="0 0 16 16" {...line} strokeWidth="2"><path d="M1 8h14" /></svg></SpinButton>
            <Amount aria-label="Scale factor" defaultValue="1" />
            <SpinButton aria-label="Increase"><svg width="16" height="16" viewBox="0 0 16 16" {...line} strokeWidth="2"><path d="M1 8h14M8 1v14" /></svg></SpinButton>
            <ScaleSelect>
              <SelectBox $w={88}>
                <select aria-label="Scale mode" defaultValue="Scale"><option>Scale</option></select>
                <ChevronDown />
              </SelectBox>
            </ScaleSelect>
            <StepButton aria-label="First step"><TransportIcon kind="first" /></StepButton>
            <StepButton aria-label="Last step"><TransportIcon kind="last" /></StepButton>
            <StepButton aria-label="Play"><TransportIcon kind="play" /></StepButton>
            <StepSlider type="range" aria-label="Step" defaultValue={100} />
            <SelectBox $w={113} $off>
              <select aria-label="Step" disabled defaultValue="Step 0"><option>Step 0</option></select>
              <ChevronDown c="#a5a5a5" />
            </SelectBox>
            <Percent>100%</Percent>
            <Divider />
            <ToolGroup>
              <ToolButton aria-label="Add page">
                <svg width="20" height="24" viewBox="0 0 20 24" {...line}><path d="M5.500 2H16q2 0 2 2v16q0 2-2 2H4q-2 0-2-2V5.500ZM10 7.500v9M5.500 12h9" /></svg>
              </ToolButton>
              <ToolButton aria-label="Check pages">
                <svg width="25" height="25" viewBox="0 0 25 25" {...line}><path d="M4 8.500h9.500q2 0 2 2V22q0 2-2 2H3q-2 0-2-2V11.500ZM5 16.500l3 3 5-5.500M4.500 6.500 6 4.800h10q3 0 3 3V20M8.500 3 10 1h11q3 0 3 3v13" /></svg>
              </ToolButton>
              <ToolButton aria-label="Zoom to fit">
                <svg width="24" height="24" viewBox="0 0 24 24" {...line} stroke="#555" strokeWidth="1.500"><circle cx="9.500" cy="9.500" r="8.500" /><path d="M5.500 8V5.500H8M11 5.500h2.500V8M13.500 11v2.500H11M8 13.500H5.500V11" /><path d="M16.500 16.500 22 22.500" strokeWidth="3.500" /></svg>
              </ToolButton>
              <ToolButton aria-label="View direction">
                <svg width="25" height="25" viewBox="0 0 25 25" {...line}><path d="M10.500 1.500 2 8.500v10l8.500 5 8.500-5V9M2 8.500l8.500 5v10M10.500 13.500 15 10M10.500 1.500l12.500 9.500M10.500 1.500 8.500 8l5 3M18 7l6 3.500-1 2.500-6-3ZM15.500 13.500v4" /></svg>
              </ToolButton>
            </ToolGroup>
          </Toolbar>

          <Split>
            <Center>
              <Viewport>
                <ModelScene />
                <Overlay>
                  <div>
                    <Heading>
                      <span>Load Multiplier Analysis</span>
                      <ModelName><Icon3D c="#fff" w={28} h={30} />Model A - Extruded 4 (copy)</ModelName>
                    </Heading>
                    <Unit>|U| [-]</Unit>
                    <Legend>
                      <Markers>
                        <svg width="6" height="14" viewBox="0 0 6 14"><path d="M0 2h1l5 5-5 5H0Z" fill="#ff2000" /></svg>
                        <svg width="6" height="14" viewBox="0 0 6 14"><path d="M0 2h1l5 5-5 5H0Z" fill="#0080ff" /></svg>
                      </Markers>
                      <Bands>{palette.map((c) => <Band key={c} $c={c} />)}</Bands>
                      <Ticks>{ticks.map((t) => <li key={t}>{t}</li>)}</Ticks>
                    </Legend>
                  </div>
                  <Outcome>
                    <Current>Results are current</Current>
                    Load multiplier: 1621.32
                  </Outcome>
                </Overlay>
              </Viewport>
              <StatusBar>
                <SnapGroup>
                  <SnapLabel>Snapping</SnapLabel>
                  <SnapMode><b>ABS</b> / REL</SnapMode>
                  <span>POLAR</span>
                </SnapGroup>
                <SelectionGroup>
                  <span>Selection:</span>
                  {filters.map(([n, c]) => (
                    <CheckLabel key={n}>{n}<Check type="checkbox" defaultChecked={c} /></CheckLabel>
                  ))}
                </SelectionGroup>
                <NoSelection>(no selection)</NoSelection>
              </StatusBar>
            </Center>

            <RightPanel>
              <AnalysisPane>
                <SubTabs>
                  <SubTab $on>ANALYSIS</SubTab>
                  <SubTab>MATERIALS</SubTab>
                  <SubTab>FEATURES</SubTab>
                </SubTabs>
                <StageList>
                  <StageRow>
                    <CheckCell $end><Caret /></CheckCell>
                    <Icon2D />
                    <StageName>Model A</StageName>
                  </StageRow>
                  {stages.map(([n, k], i) => (
                    <StageRow key={n}>
                      <CheckCell><Check $green type="checkbox" defaultChecked aria-label={n} /></CheckCell>
                      <svg width="22" height="27" viewBox="0 0 22 27">
                        <path d={i === 4 ? "M11 0v14" : "M11 0v27"} stroke={violet} strokeWidth="2.500" />
                        <circle cx="11" cy="13.500" r="3.800" fill={violet} />
                      </svg>
                      <StageName>{n}</StageName>
                      <Kind name={n} value={k} />
                    </StageRow>
                  ))}
                  <StageRow $on>
                    <CheckCell><Check $green type="checkbox" defaultChecked aria-label="Model A - Extruded 4 (copy)" /></CheckCell>
                    <Icon3D />
                    <StageName $dark>Model A - Extrude...</StageName>
                    <Kind on name="Extruded model" value="Load Multiplier" />
                  </StageRow>
                </StageList>
                <ActionBar>
                  <ActionButton aria-label="New 2D model">
                    <svg width="24" height="24" viewBox="0 0 24 24" {...line}><path d="M12 5H3.500Q2 5 2 6.500v14Q2 22 3.500 22h15q1.500 0 1.500-1.500V13M19 1v7M15.500 4.500h7" /><text x="10.500" y="17.500" textAnchor="middle" fontSize="10" fontWeight="700" fontFamily="Noto Sans, sans-serif" fill={ink} stroke="none">2D</text></svg>
                  </ActionButton>
                  <ActionButton aria-label="New 3D model">
                    <svg width="24" height="24" viewBox="0 0 24 24" {...line}><path d="M13 4 10.500 2.500 2 7.500v9.500l8.500 5 8.500-5V13M19 1v7M15.500 4.500h7" /><text x="10.500" y="16" textAnchor="middle" fontSize="10" fontWeight="700" fontFamily="Noto Sans, sans-serif" fill={ink} stroke="none">3D</text></svg>
                  </ActionButton>
                  <ActionButton aria-label="New stage">
                    <svg width="24" height="24" viewBox="0 0 24 24" {...line}><path d="M9 7.500 15.500 14 9 20.500 2.500 14ZM18.500 1.500v7M15 5h7" /></svg>
                  </ActionButton>
                  <ActionButton aria-label="Duplicate">
                    <svg width="22" height="22" viewBox="0 0 22 22" {...line}><rect x="7.500" y="7.500" width="12" height="12" rx="2" /><path d="M7 13.500H4q-2 0-2-2V4q0-2 2-2h7.500q2 0 2 2v3" /></svg>
                  </ActionButton>
                  <ActionButton aria-label="Delete">
                    <svg width="20" height="22" viewBox="0 0 20 22" {...line}><path d="M2 5h16M7 4.500V2h6v2.500M3.500 5.500V18q0 2.500 2.500 2.500h8q2.500 0 2.500-2.500V5.500M8 9.500v7M12 9.500v7" /></svg>
                  </ActionButton>
                  <ActionButton aria-label="Run">
                    <svg width="22" height="22" viewBox="0 0 22 22" {...line}><rect x="1.500" y="1.500" width="19" height="19" rx="1" /><path d="M7 6.500v9L16 11Z" fill={ink} /></svg>
                  </ActionButton>
                </ActionBar>
              </AnalysisPane>
              <PropertiesPane>
                <SubTabs>
                  <SubTab $on>PROPERTIES</SubTab>
                  <SubTab>2D to 3D</SubTab>
                </SubTabs>
                <Empty>Nothing selected</Empty>
              </PropertiesPane>
            </RightPanel>
          </Split>
        </Workspace>
      </Body>
    </Window>
  );
}
